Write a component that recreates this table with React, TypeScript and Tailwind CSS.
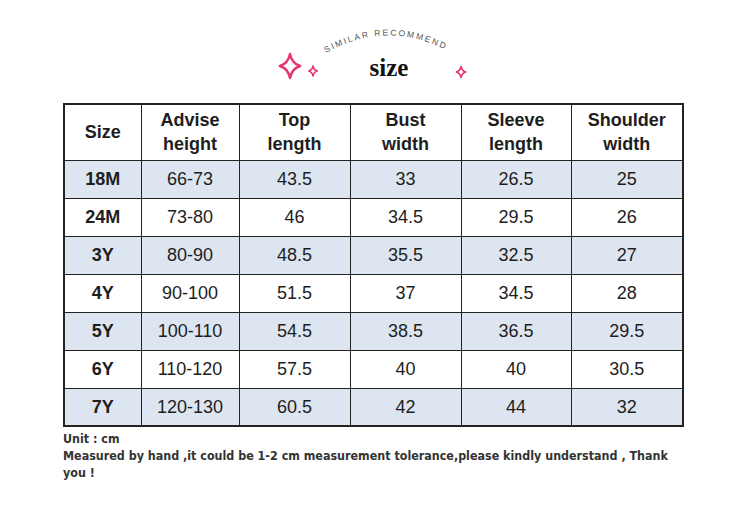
const headers = [
  ['Size'],
  ['Advise', 'height'],
  ['Top', 'length'],
  ['Bust', 'width'],
  ['Sleeve', 'length'],
  ['Shoulder', 'width'],
];

const rows = [
  ['18M', '66-73', '43.5', '33', '26.5', '25'],
  ['24M', '73-80', '46', '34.5', '29.5', '26'],
  ['3Y', '80-90', '48.5', '35.5', '32.5', '27'],
  ['4Y', '90-100', '51.5', '37', '34.5', '28'],
  ['5Y', '100-110', '54.5', '38.5', '36.5', '29.5'],
  ['6Y', '110-120', '57.5', '40', '40', '30.5'],
  ['7Y', '120-130', '60.5', '42', '44', '32'],
];

const widths = ['w-[77px]', 'w-[98px]', 'w-[111px]', 'w-[111px]', 'w-[110px]', 'w-[112px]'];

function Star({ cx, cy, r, sw }: { cx: number; cy: number; r: number; sw: number }) {
  const k = r * 0.18;
  const d = `M${cx},${cy - r} Q${cx + k},${cy - k} ${cx + r * 0.85},${cy} Q${cx + k},${cy + k} ${cx},${cy + r} Q${cx - k},${cy + k} ${cx - r * 0.85},${cy} Q${cx - k},${cy - k} ${cx},${cy - r} Z`;
  return <path d={d} fill="white" stroke="#e8336d" strokeWidth={sw} strokeLinejoin="round" />;
}

function Title() {
  return (
    <div className="h-[103px] w-full">
      <svg width="750" height="103" viewBox="0 0 750 103">
        <defs>
          <path id="arc" d="M 326,53 Q 388,18 452,53" />
        </defs>
        <text fontFamily="'Liberation Sans', Arial, sans-serif" fontSize="8.5" fill="#555" letterSpacing="1.9">
          <textPath href="#arc">SIMILAR   RECOMMEND</textPath>
        </text>
        <text
          x="389"
          y="76"
          textAnchor="middle"
          fontFamily="'Liberation Serif', 'Times New Roman', serif"
          fontWeight="700"
          fontSize="25"
          fill="#111"
        >
          size
        </text>
        <Star cx={290} cy={66} r={12} sw={2.4} />
        <Star cx={313} cy={71} r={5} sw={1.6} />
        <Star cx={461} cy={72} r={5.5} sw={1.6} />
      </svg>
    </div>
  );
}

export default function App() {
  return (
    <div className="w-[750px] h-[528px] bg-white" style={{ fontFamily: "'Liberation Sans', Arial, sans-serif" }}>
      <Title />
      <div className="pl-[63px]">
        <table className="border-collapse border-2 border-[#222] text-[#1e1e1e]">
          <thead>
            <tr className="h-[56px]">
              {headers.map((h, i) => (
                <th
                  key={i}
                  className={`${widths[i]} border border-[#222] text-center text-[18px] font-bold leading-[24px] align-middle`}
                >
                  {h.map((line) => (
                    <div key={line}>{line}</div>
                  ))}
                </th>
              ))}
            </tr>
          </thead>
          <tbody>
            {rows.map((r, ri) => (
              <tr key={ri} className={`h-[38px] ${ri % 2 === 0 ? 'bg-[#dce5f0]' : 'bg-white'}`}>
                {r.map((c, ci) => (
                  <td
                    key={ci}
                    className={`border border-[#222] text-center text-[18px] leading-[20px] align-middle ${ci === 0 ? 'font-bold' : 'font-normal'}`}
                  >
                    {c}
                  </td>
                ))}
              </tr>
            ))}
          </tbody>
        </table>
        <div
          className="mt-[3px] w-[625px] text-[12.4px] leading-[17px] font-bold text-[#333]"
          style={{ fontFamily: "'DejaVu Sans Condensed', 'DejaVu Sans', sans-serif", fontStretch: 'condensed' }}
        >
          <div>Unit : cm</div>
          <div>
            Measured by hand ,it could be 1-2 cm measurement tolerance,please kindly understand , Thank you !
          </div>
        </div>
      </div>
    </div>
  );
}
